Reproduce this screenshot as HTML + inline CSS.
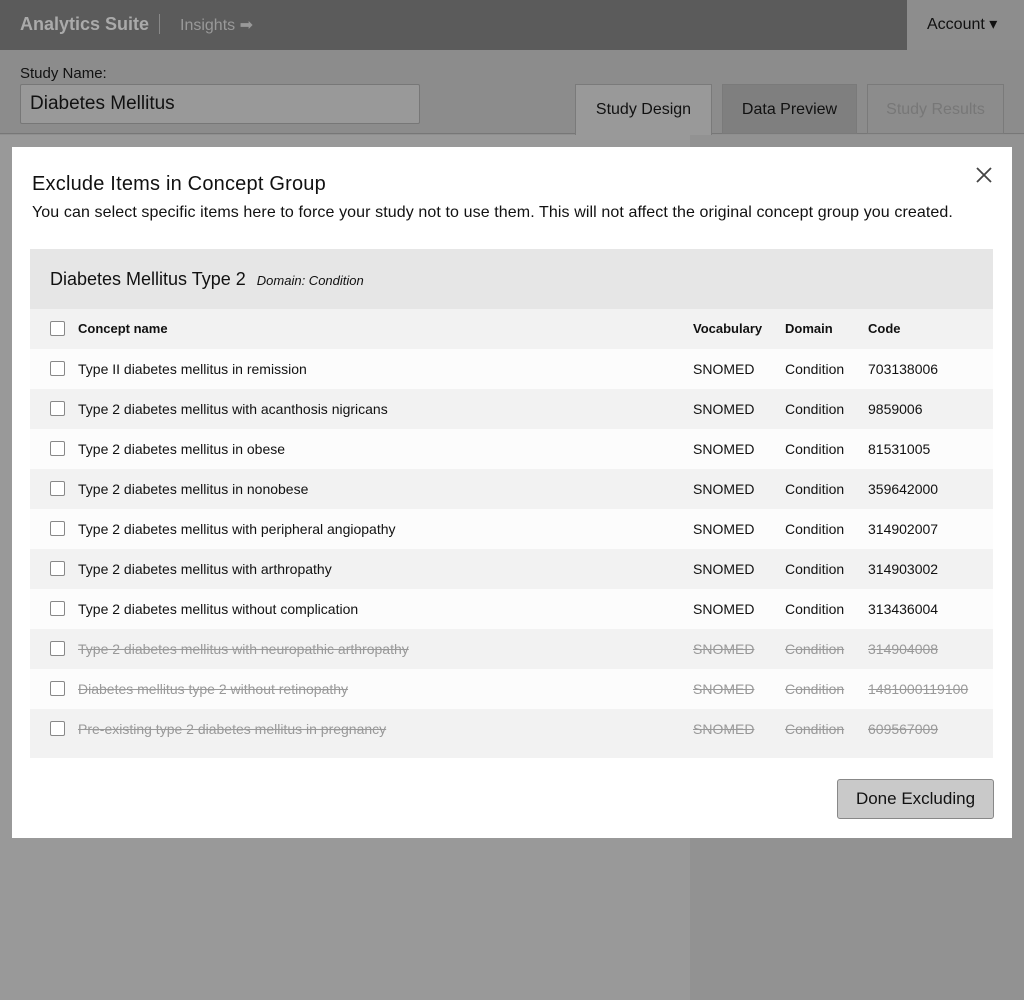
<!DOCTYPE html>
<html><head><style>
*{margin:0;padding:0;box-sizing:border-box}
body{width:1024px;height:1000px;position:relative;background:#8f8f8f;font-family:"Liberation Sans",sans-serif;overflow:hidden;color:#111}
.top{position:absolute;left:0;top:0;width:1024px;height:50px;background:#5b5b5b}
.acct{position:absolute;right:0;top:0;width:117px;height:50px;background:#8d8d8d;color:#111;font-size:16px;line-height:50px;padding-left:20px}
.sub{position:absolute;left:0;top:50px;width:1024px;height:84px;background:#8c8c8c;border-bottom:1px solid #777}
.lower-l{position:absolute;left:0;top:135px;width:690px;height:865px;background:#999}
.lower-r{position:absolute;left:690px;top:135px;width:334px;height:865px;background:#929292}
.tab{position:absolute;top:84px;height:50px;border:1px solid #7a7a7a;font-size:16px;text-align:center;line-height:50px}
.modal{position:absolute;left:12px;top:147px;width:1000px;height:691px;background:#fff}
.tbl{position:absolute;left:18px;top:102px;width:963px;height:509px;background:#f2f2f2}
.row{position:absolute;left:0;width:963px;height:40px;font-size:14px;line-height:40px}
.row span{position:absolute}
.cb{position:absolute;left:20px;top:12px;width:15px;height:15px;border:1px solid #888;background:#fff;border-radius:2px}
.x span{color:#999;text-decoration:line-through}
</style></head><body>
<div class="top">
<span style="position:absolute;left:20px;top:14px;font-size:18px;color:#aaa;font-weight:bold">Analytics Suite</span>
<span style="position:absolute;left:159px;top:14px;width:1px;height:20px;background:#888"></span>
<span style="position:absolute;left:180px;top:15px;font-size:16px;color:#999">Insights ➡</span>
<div class="acct">Account ▾</div>
</div>
<div class="sub">
<span style="position:absolute;left:20px;top:15px;font-size:15px">Study Name:</span>
<div style="position:absolute;left:20px;top:34px;width:400px;height:40px;border:1px solid #777;background:#999;border-radius:2px;font-size:19px;line-height:38px;padding-left:9px">Diabetes Mellitus</div>
</div>
<div class="lower-l"></div><div class="lower-r"></div>
<div class="tab" style="left:575px;width:137px;background:#999;border-bottom:none;height:51px">Study Design</div>
<div class="tab" style="left:722px;width:135px;background:#7f7f7f">Data Preview</div>
<div class="tab" style="left:867px;width:137px;background:#8c8c8c;color:#777">Study Results</div>
<div class="modal">
<div style="position:absolute;left:20px;top:26px;font-size:20px;letter-spacing:0.2px">Exclude Items in Concept Group</div>
<svg style="position:absolute;left:964px;top:20px" width="16" height="16" viewBox="0 0 16 16"><path d="M1 1L15 15M15 1L1 15" stroke="#444" stroke-width="1.8" fill="none"/></svg>
<div style="position:absolute;left:20px;top:57px;font-size:16px;letter-spacing:0.1px;white-space:nowrap">You can select specific items here to force your study not to use them. This will not affect the original concept group you created.</div>
<div class="tbl">
<div style="position:absolute;left:0;top:0;width:963px;height:60px;background:#e6e6e6;font-size:18px;line-height:60px;padding-left:20px">Diabetes Mellitus Type 2 <i style="font-size:13px;margin-left:6px">Domain: Condition</i></div>
<div class="row" style="top:60px;background:#f2f2f2;font-weight:bold;font-size:13px"><div class="cb"></div><span style="left:48px">Concept name</span><span style="left:663px">Vocabulary</span><span style="left:755px">Domain</span><span style="left:838px">Code</span></div>
<div class="row" style="top:100px;background:#fcfcfc"><div class="cb"></div><span style="left:48px">Type II diabetes mellitus in remission</span><span style="left:663px">SNOMED</span><span style="left:755px">Condition</span><span style="left:838px">703138006</span></div>
<div class="row" style="top:140px"><div class="cb"></div><span style="left:48px">Type 2 diabetes mellitus with acanthosis nigricans</span><span style="left:663px">SNOMED</span><span style="left:755px">Condition</span><span style="left:838px">9859006</span></div>
<div class="row" style="top:180px;background:#fcfcfc"><div class="cb"></div><span style="left:48px">Type 2 diabetes mellitus in obese</span><span style="left:663px">SNOMED</span><span style="left:755px">Condition</span><span style="left:838px">81531005</span></div>
<div class="row" style="top:220px"><div class="cb"></div><span style="left:48px">Type 2 diabetes mellitus in nonobese</span><span style="left:663px">SNOMED</span><span style="left:755px">Condition</span><span style="left:838px">359642000</span></div>
<div class="row" style="top:260px;background:#fcfcfc"><div class="cb"></div><span style="left:48px">Type 2 diabetes mellitus with peripheral angiopathy</span><span style="left:663px">SNOMED</span><span style="left:755px">Condition</span><span style="left:838px">314902007</span></div>
<div class="row" style="top:300px"><div class="cb"></div><span style="left:48px">Type 2 diabetes mellitus with arthropathy</span><span style="left:663px">SNOMED</span><span style="left:755px">Condition</span><span style="left:838px">314903002</span></div>
<div class="row" style="top:340px;background:#fcfcfc"><div class="cb"></div><span style="left:48px">Type 2 diabetes mellitus without complication</span><span style="left:663px">SNOMED</span><span style="left:755px">Condition</span><span style="left:838px">313436004</span></div>
<div class="row x" style="top:380px"><div class="cb"></div><span style="left:48px">Type 2 diabetes mellitus with neuropathic arthropathy</span><span style="left:663px">SNOMED</span><span style="left:755px">Condition</span><span style="left:838px">314904008</span></div>
<div class="row x" style="top:420px;background:#fcfcfc"><div class="cb"></div><span style="left:48px">Diabetes mellitus type 2 without retinopathy</span><span style="left:663px">SNOMED</span><span style="left:755px">Condition</span><span style="left:838px">1481000119100</span></div>
<div class="row x" style="top:460px"><div class="cb"></div><span style="left:48px">Pre-existing type 2 diabetes mellitus in pregnancy</span><span style="left:663px">SNOMED</span><span style="left:755px">Condition</span><span style="left:838px">609567009</span></div>
</div>
<div style="position:absolute;left:825px;top:632px;width:157px;height:40px;background:#c9c9c9;border:1px solid #888;border-radius:3px;font-size:17px;line-height:38px;text-align:center">Done Excluding</div>
</div>
</body></html>
